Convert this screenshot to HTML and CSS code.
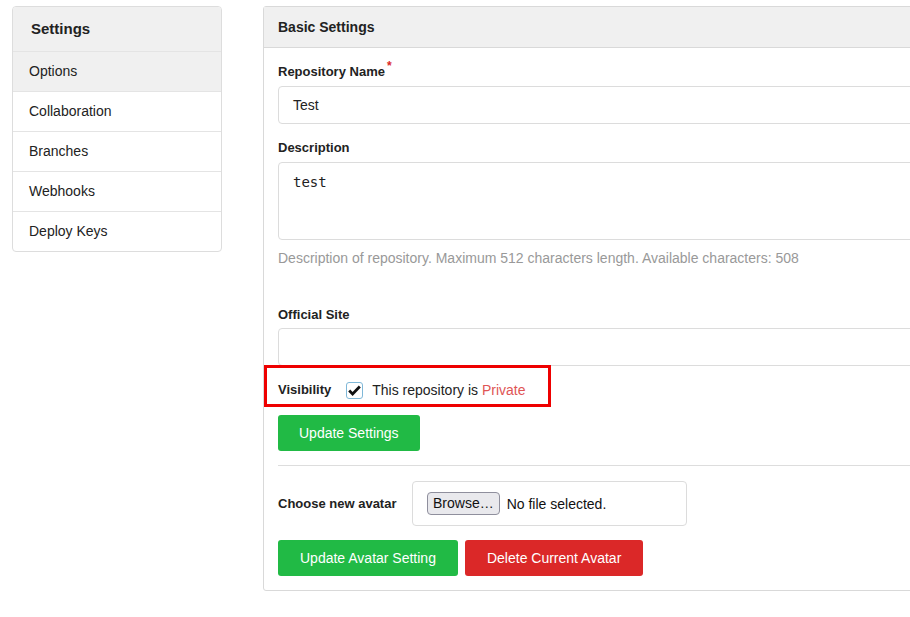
FILE: index.html
```html
<!DOCTYPE html>
<html lang="en">
<head>
<meta charset="utf-8">
<title>Settings</title>
<link rel="stylesheet" href="styles.css">
</head>
<body>
<div class="page">
  <nav class="sidebar">
    <div class="sidebar-header">Settings</div>
    <a class="sidebar-item active">Options</a>
    <a class="sidebar-item">Collaboration</a>
    <a class="sidebar-item">Branches</a>
    <a class="sidebar-item">Webhooks</a>
    <a class="sidebar-item">Deploy Keys</a>
  </nav>
  <main class="panel">
    <div class="panel-header">Basic Settings</div>
    <div class="panel-body">
      <div class="field">
        <label class="label required">Repository Name</label>
        <div class="input">Test</div>
      </div>
      <div class="field">
        <label class="label">Description</label>
        <div class="textarea">test</div>
        <p class="help">Description of repository. Maximum 512 characters length. Available characters: 508</p>
      </div>
      <div class="field field-site">
        <label class="label site-label">Official Site</label>
        <div class="input"></div>
      </div>
      <div class="visibility">
        <span class="label inline">Visibility</span>
        <span class="checkbox"><svg width="13" height="11" viewBox="0 0 13 11"><path d="M1.2 5.6 L4.6 9 L11.8 1.6" fill="none" stroke="#111" stroke-width="2.8" stroke-linejoin="miter"/></svg></span>
        <span class="vis-text">This repository is <span class="private">Private</span></span>
      </div>
      <div class="actions">
        <button class="btn green">Update Settings</button>
      </div>
      <hr class="divider">
      <div class="avatar-row">
        <span class="label inline avatar-label">Choose new avatar</span>
        <div class="file-box">
          <span class="browse">Browse…</span>
          <span class="file-text">No file selected.</span>
        </div>
      </div>
      <div class="actions avatar-actions">
        <button class="btn green">Update Avatar Setting</button>
        <button class="btn red">Delete Current Avatar</button>
      </div>
    </div>
  </main>
</div>
</body>
</html>
```
FILE: styles.css
```css
html, body {
  margin: 0;
  padding: 0;
  background: #fff;
  overflow: hidden;
}
body {
  font-family: "Liberation Sans", Arial, sans-serif;
  font-size: 14px;
  color: #333;
}
.page {
  display: flex;
  align-items: flex-start;
  padding: 6px 0 0 12px;
  width: 1400px;
}
.sidebar {
  width: 208px;
  border: 1px solid #ddd;
  border-radius: 4px;
  display: flex;
  flex-direction: column;
  overflow: hidden;
  flex: none;
}
.sidebar-header {
  height: 44px;
  line-height: 44px;
  padding-left: 18px;
  background: #f0f0f0;
  font-weight: bold;
  font-size: 15px;
  color: #222;
}
.sidebar-item {
  display: block;
  height: 39px;
  line-height: 39px;
  border-top: 1px solid #e4e4e4;
  padding-left: 16px;
  color: #222;
}
.sidebar-item.active {
  background: #f0f0f0;
}
.panel {
  margin-left: 41px;
  width: 760px;
  border: 1px solid #d9d9d9;
  border-radius: 3px 0 0 3px;
  flex: none;
}
.panel-header {
  height: 40px;
  line-height: 40px;
  background: #f0f0f0;
  border-bottom: 1px solid #d9d9d9;
  padding-left: 14px;
  font-weight: bold;
  font-size: 14px;
  color: #222;
}
.panel-body {
  padding: 14px 14px 14px 14px;
}
.field {
  margin-bottom: 14px;
}
.label {
  display: block;
  font-weight: bold;
  font-size: 13px;
  line-height: 20px;
  color: #222;
  margin-bottom: 4px;
}
.label.site-label {
  margin-bottom: 3px;
}
.label.inline {
  display: inline-block;
  margin-bottom: 0;
}
.required::after {
  content: "*";
  color: #db2828;
  font-size: 12px;
  position: relative;
  top: -6px;
  margin-left: 2px;
}
.input {
  height: 36px;
  line-height: 36px;
  border: 1px solid #dcdcdc;
  border-radius: 4px;
  padding: 0 14px;
  font-size: 14px;
  color: #222;
}
.textarea {
  border: 1px solid #dcdcdc;
  border-radius: 4px;
  padding: 10px 14px 0;
  box-sizing: border-box;
  height: 78px;
  font-family: "DejaVu Sans Mono", monospace;
  font-size: 14px;
  line-height: 18px;
  color: #222;
}
.help {
  margin: 8px 0 0;
  line-height: 20px;
  color: #999;
  font-size: 14px;
}
.field-site {
  margin-top: 37px;
  margin-bottom: 0;
}
.visibility {
  display: flex;
  align-items: center;
  width: 270px;
  height: 20px;
  margin-top: -1px;
  margin-left: -14px;
  padding: 12px 0 4px 11px;
  border: 3px solid #ee0000;
}
.checkbox {
  width: 15px;
  height: 15px;
  margin-left: 15px;
  border: 1px solid #7fb8d8;
  border-radius: 3px;
  background: #fff;
  display: inline-flex;
  align-items: center;
  justify-content: center;
}
.vis-text {
  margin-left: 9px;
  font-size: 14px;
  color: #222;
}
.private {
  color: #e05555;
}
.actions {
  display: flex;
  gap: 7px;
  margin-top: 8px;
}
.btn {
  height: 36px;
  padding: 0 21px;
  border: none;
  border-radius: 3px;
  font-family: "Liberation Sans", Arial, sans-serif;
  font-size: 14px;
  color: #fff;
}
.btn.green {
  background: #21ba45;
}
.btn.red {
  background: #db2828;
}
.divider {
  border: none;
  border-top: 1px solid #ddd;
  margin: 14px 0 15px;
}
.avatar-row {
  display: flex;
  align-items: center;
}
.avatar-label {
  width: 134px;
}
.file-box {
  width: 245px;
  height: 43px;
  border: 1px solid #dcdcdc;
  border-radius: 4px;
  padding: 0 14px;
  display: flex;
  align-items: center;
}
.browse {
  height: 21px;
  line-height: 21px;
  padding: 0 5px;
  background: #e9e9ed;
  border: 1px solid #8f8f9d;
  border-radius: 4px;
  font-size: 14px;
  color: #111;
}
.file-text {
  margin-left: 7px;
  font-size: 14px;
  color: #111;
}
.avatar-actions {
  margin-top: 14px;
}
.avatar-actions .btn {
  padding: 0 22px;
}
```
